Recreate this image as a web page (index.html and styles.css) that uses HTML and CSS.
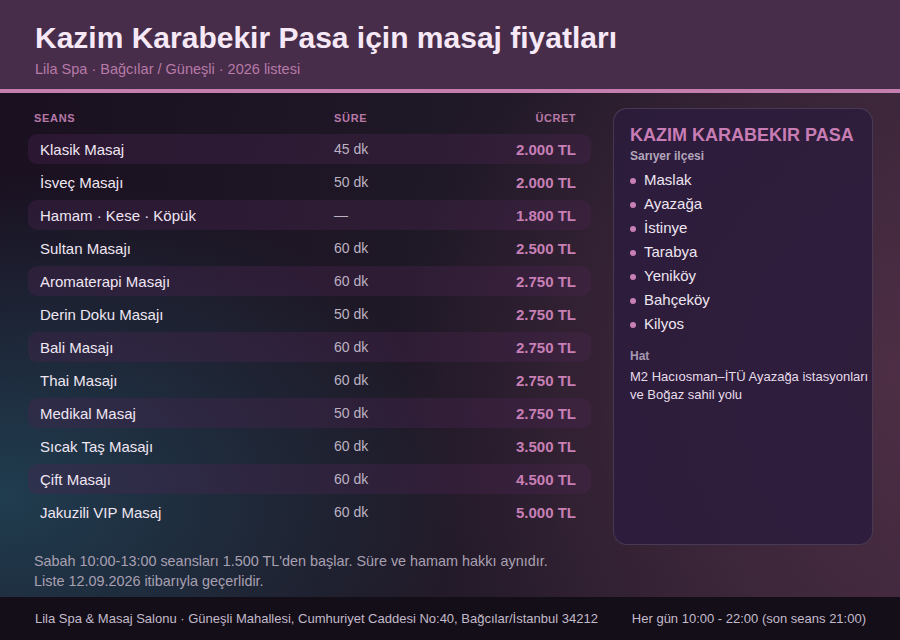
FILE: index.html
```html
<!DOCTYPE html>
<html lang="tr">
<head>
<meta charset="utf-8">
<title>Kazim Karabekir Pasa için masaj fiyatları</title>
<link rel="stylesheet" href="styles.css">
</head>
<body>
<div class="page">
  <header class="top">
    <h1 class="title">Kazim Karabekir Pasa için masaj fiyatları</h1>
    <p class="subtitle">Lila Spa · Bağcılar / Güneşli · 2026 listesi</p>
  </header>
  <main class="main">
    <section class="left">
      <div class="thead">
        <span class="c-name">SEANS</span>
        <span class="c-dur">SÜRE</span>
        <span class="c-price">ÜCRET</span>
      </div>
      <div class="rows">
        <div class="row alt"><span class="c-name">Klasik Masaj</span><span class="c-dur">45 dk</span><span class="c-price">2.000 TL</span></div>
        <div class="row"><span class="c-name">İsveç Masajı</span><span class="c-dur">50 dk</span><span class="c-price">2.000 TL</span></div>
        <div class="row alt"><span class="c-name">Hamam · Kese · Köpük</span><span class="c-dur">—</span><span class="c-price">1.800 TL</span></div>
        <div class="row"><span class="c-name">Sultan Masajı</span><span class="c-dur">60 dk</span><span class="c-price">2.500 TL</span></div>
        <div class="row alt"><span class="c-name">Aromaterapi Masajı</span><span class="c-dur">60 dk</span><span class="c-price">2.750 TL</span></div>
        <div class="row"><span class="c-name">Derin Doku Masajı</span><span class="c-dur">50 dk</span><span class="c-price">2.750 TL</span></div>
        <div class="row alt"><span class="c-name">Bali Masajı</span><span class="c-dur">60 dk</span><span class="c-price">2.750 TL</span></div>
        <div class="row"><span class="c-name">Thai Masajı</span><span class="c-dur">60 dk</span><span class="c-price">2.750 TL</span></div>
        <div class="row alt"><span class="c-name">Medikal Masaj</span><span class="c-dur">50 dk</span><span class="c-price">2.750 TL</span></div>
        <div class="row"><span class="c-name">Sıcak Taş Masajı</span><span class="c-dur">60 dk</span><span class="c-price">3.500 TL</span></div>
        <div class="row alt"><span class="c-name">Çift Masajı</span><span class="c-dur">60 dk</span><span class="c-price">4.500 TL</span></div>
        <div class="row"><span class="c-name">Jakuzili VIP Masaj</span><span class="c-dur">60 dk</span><span class="c-price">5.000 TL</span></div>
      </div>
      <div class="notes">
        <p>Sabah 10:00-13:00 seansları 1.500 TL'den başlar. Süre ve hamam hakkı aynıdır.</p>
        <p>Liste 12.09.2026 itibarıyla geçerlidir.</p>
      </div>
    </section>
    <aside class="panel">
      <h2 class="panel-title">KAZIM KARABEKIR PASA</h2>
      <p class="panel-sub">Sarıyer ilçesi</p>
      <ul class="areas">
        <li>Maslak</li>
        <li>Ayazağa</li>
        <li>İstinye</li>
        <li>Tarabya</li>
        <li>Yeniköy</li>
        <li>Bahçeköy</li>
        <li>Kilyos</li>
      </ul>
      <p class="panel-label">Hat</p>
      <p class="route"><span class="line">M2 Hacıosman–İTÜ Ayazağa istasyonları</span><span class="line">ve Boğaz sahil yolu</span></p>
    </aside>
  </main>
  <footer class="foot">
    <span>Lila Spa &amp; Masaj Salonu · Güneşli Mahallesi, Cumhuriyet Caddesi No:40, Bağcılar/İstanbul 34212</span>
    <span>Her gün 10:00 - 22:00 (son seans 21:00)</span>
  </footer>
</div>
</body>
</html>
```
FILE: styles.css
```css
* { box-sizing: border-box; }
html, body { margin: 0; padding: 0; }
body {
  width: 900px;
  height: 640px;
  overflow: hidden;
  font-family: "Liberation Sans", Arial, sans-serif;
  background: #1a1220;
}
.page {
  width: 900px;
  height: 640px;
  display: flex;
  flex-direction: column;
}
.top {
  height: 93px;
  background: #472d4a;
  border-bottom: 4px solid #c47fb0;
  padding: 20px 35px 0;
}
.title {
  margin: 0;
  font-size: 30px;
  line-height: 36px;
  font-weight: bold;
  color: #f6e8f6;
}
.subtitle {
  margin: 3px 0 0;
  font-size: 14.5px;
  line-height: 20px;
  color: #b87aa8;
}
.main {
  flex: 1;
  display: flex;
  gap: 22px;
  padding: 15px 27px 0 28px;
  background:
    radial-gradient(ellipse 460px 320px at 0% 80%, rgba(34, 84, 104, 0.65), rgba(34, 84, 104, 0) 100%),
    radial-gradient(ellipse 500px 420px at 100% 55%, rgba(95, 55, 80, 0.55), rgba(95, 55, 80, 0) 100%),
    linear-gradient(100deg, #1a1020 0%, #1f1826 45%, #3a2538 100%);
}
.left {
  width: 563px;
  display: flex;
  flex-direction: column;
}
.thead {
  display: flex;
  height: 16px;
  align-items: center;
  padding: 0 15px 0 6px;
  margin-top: 2px;
  font-size: 11px;
  font-weight: bold;
  letter-spacing: 0.7px;
  color: #b878a8;
}
.thead .c-name { width: 300px; }
.thead .c-dur { width: 120px; }
.thead .c-price { flex: 1; text-align: right; letter-spacing: 0.5px; }
.rows {
  margin-top: 8px;
  display: flex;
  flex-direction: column;
  gap: 3px;
}
.row {
  display: flex;
  align-items: center;
  height: 30px;
  padding: 0 15px 0 12px;
  border-radius: 9px;
  font-size: 15px;
}
.row.alt { background: rgba(74, 36, 80, 0.36); }
.row .c-name { width: 294px; color: #efe6f2; }
.row .c-dur { width: 120px; font-size: 14px; color: #bcb2c2; }
.row .c-price { flex: 1; text-align: right; font-weight: bold; color: #c77fb5; }
.notes {
  margin-top: 24px;
  padding-left: 6px;
  font-size: 14.4px;
  line-height: 20px;
  color: #a9a0b2;
}
.notes p { margin: 0; }
.panel {
  width: 260px;
  height: 437px;
  margin-top: 0;
  border: 1px solid rgba(255, 255, 255, 0.13);
  border-radius: 14px;
  background: rgba(44, 28, 60, 0.92);
  padding: 15px 0 0 16px;
}
.panel-title {
  margin: 0;
  font-size: 18px;
  line-height: 22px;
  font-weight: bold;
  color: #c87db4;
}
.panel-sub {
  margin: 2px 0 0;
  font-size: 12px;
  line-height: 16px;
  font-weight: bold;
  color: #b3a6bb;
}
.areas {
  list-style: none;
  margin: 3px 0 0;
  padding: 0;
}
.areas li {
  display: flex;
  align-items: center;
  height: 24px;
  font-size: 15px;
  color: #ede5f1;
}
.areas li::before {
  content: "";
  width: 6px;
  height: 6px;
  border-radius: 50%;
  background: #c77fb5;
  margin: 3px 8px 0 0;
}
.panel-label {
  margin: 13px 0 0;
  font-size: 12px;
  line-height: 16px;
  font-weight: bold;
  color: #a898b0;
}
.route {
  margin: 4px 0 0;
  font-size: 13px;
  line-height: 18px;
  color: #e6dcea;
}
.route .line { display: block; white-space: nowrap; }
.foot {
  height: 43px;
  flex: none;
  background: #140e18;
  display: flex;
  align-items: center;
  justify-content: space-between;
  padding: 0 34px 0 35px;
  font-size: 13px;
  color: #c3bbcb;
}
```
